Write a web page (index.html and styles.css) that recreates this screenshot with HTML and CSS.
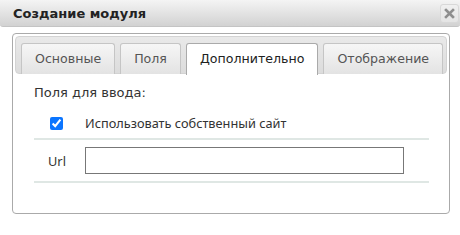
FILE: index.html
```html
<!DOCTYPE html>
<html>
	<head>
		<meta charset="UTF-8">
		<title>Создание модуля</title>
		<link rel="stylesheet" href="styles.css">
	</head>
	<body>
		<div class="dialog">
			<div class="titlebar">
				<span class="title">Создание модуля</span>
				<a class="close" href="#">
					<svg width="11" height="11" viewBox="0 0 11 11">
						<path d="M2 2 L9 9 M9 2 L2 9" stroke="#8e8e8e" stroke-width="2.6" stroke-linecap="square"/>
					</svg>
				</a>
			</div>
			<div class="content">
				<div class="tabs">
					<ul class="tabnav">
						<li><a href="#">Основные</a></li>
						<li><a href="#">Поля</a></li>
						<li class="active"><a href="#">Дополнительно</a></li>
						<li><a href="#">Отображение</a></li>
					</ul>
					<div class="panel">
						<div class="legend">Поля для ввода:</div>
						<table class="fields">
							<tr class="row-check">
								<td class="col1"><input type="checkbox" checked></td>
								<td class="col2">Использовать собственный сайт</td>
							</tr>
							<tr class="row-url">
								<td class="col1">Url</td>
								<td class="col2"><input type="text" class="url"></td>
							</tr>
						</table>
					</div>
				</div>
			</div>
		</div>
	</body>
</html>
```

FILE: styles.css
```css
*{
	margin: 0;
	padding: 0;
	list-style: none;
	box-sizing: border-box;
}
body{
	background-color: #fff;
	font-family: "DejaVu Sans", Verdana, sans-serif;
	font-size: 13px;
	color: #333;
}
.dialog{
	width: 460px;
	height: 235px;
}
.titlebar{
	height: 27px;
	display: flex;
	align-items: center;
	justify-content: space-between;
	padding: 0 1px 0 13px;
	background: linear-gradient(#f4f4f4, #d2d2d2);
	border-bottom: 1px solid #c4c4c4;
	border-radius: 0 0 3px 3px;
}
.title{
	font-weight: bold;
	font-size: 13px;
	color: #222;
}
.close{
	width: 19px;
	height: 19px;
	display: flex;
	align-items: center;
	justify-content: center;
	background: linear-gradient(#f0f0f0, #e4e4e4);
	border: 1px solid #d8d8d8;
	border-radius: 3px;
}
.content{
	padding: 6px 10px 0 12px;
}
.tabs{
	height: 181px;
	border: 1px solid #aaa;
	border-radius: 4px;
	padding: 2px;
}
.tabnav{
	display: flex;
	gap: 5px;
	padding: 6px 5px 0 5px;
	background: linear-gradient(#e9e9e9, #dcdcdc);
	border: 1px solid #d3d3d3;
	border-radius: 4px;
	height: 38px;
}
.tabnav li{
	height: 31px;
	border: 1px solid #c5c5c5;
	border-bottom: none;
	border-radius: 3px 3px 0 0;
	background: linear-gradient(#f6f6f6, #e3e3e3);
}
.tabnav li a{
	display: block;
	line-height: 30px;
	padding: 0 13px;
	font-size: 12.6px;
	color: #555;
	text-decoration: none;
}
.tabnav li.active{
	height: 32px;
	background: #fff;
	border-color: #aaa;
}
.tabnav li.active a{
	color: #212121;
}
.panel{
	padding: 11px 18px 0 19px;
}
.legend{
	line-height: 16px;
}
.fields{
	width: 100%;
	border-collapse: collapse;
	margin-top: 7px;
	font-family: "Noto Sans", "Open Sans", sans-serif;
	font-size: 12.75px;
}
.fields td{
	border-bottom: 2px solid #dfe7e4;
}
.col1{
	width: 46px;
	text-align: center;
}
.col2{
	padding-left: 5px;
}
.row-check td{
	height: 31px;
}
.row-check input{
	width: 13px;
	height: 13px;
	vertical-align: middle;
	margin-top: -2px;
	margin-left: -2px;
	accent-color: #0b75ff;
}
.row-url td{
	height: 43px;
}
.url{
	display: block;
	width: 319px;
	height: 27px;
	border: 1px solid #777;
}
```
